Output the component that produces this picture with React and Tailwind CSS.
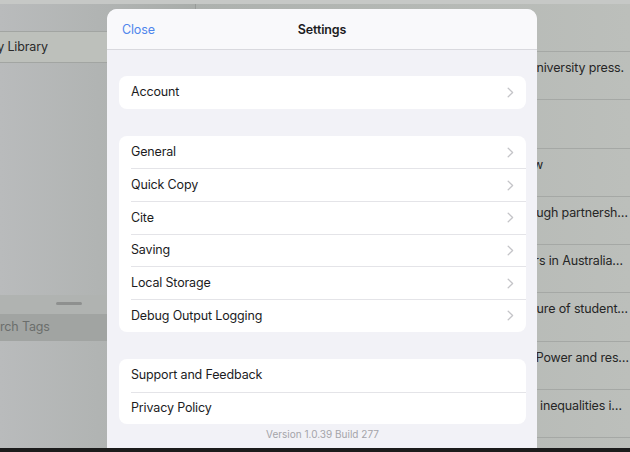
import React from 'react';

const groups = [
  [{ label: 'Account', chevron: true }],
  [
    { label: 'General', chevron: true },
    { label: 'Quick Copy', chevron: true },
    { label: 'Cite', chevron: true },
    { label: 'Saving', chevron: true },
    { label: 'Local Storage', chevron: true },
    { label: 'Debug Output Logging', chevron: true },
  ],
  [
    { label: 'Support and Feedback', chevron: false },
    { label: 'Privacy Policy', chevron: false },
  ],
];

// titles behind the sheet, only their tails show
const items = [
  { t: 'Cambridge university press.', pr: 'pr-[6px]' },
  { t: '', pr: 'pr-[6px]' },
  { t: 'Student voice: a literature review', pr: 'pr-[87px]' },
  { t: 'Building capacity through partnersh…', pr: 'pr-[2px]' },
  { t: 'Indigenous teachers in Australia…', pr: 'pr-[7px]' },
  { t: 'The changing nature of student…', pr: 'pr-[2px]' },
  { t: 'Power and res…', pr: 'pr-[1px]' },
  { t: 'Educational inequalities i…', pr: 'pr-[8px]' },
  { t: '', pr: 'pr-[6px]' },
];

function Chevron() {
  return (
    <svg width="7" height="11" viewBox="0 0 7 11" className="shrink-0">
      <path d="M1.2 1.2 L5.6 5.5 L1.2 9.8" fill="none" stroke="#c4c4c8" strokeWidth="1.3" strokeLinecap="round" strokeLinejoin="round" />
    </svg>
  );
}

function Group({ rows }) {
  return (
    <div className="bg-white rounded-[8px] overflow-hidden">
      {rows.map((r, i) => (
        <div key={r.label} className="flex items-center h-[32.7px] pl-[12px]">
          <div className={`flex-1 h-full flex items-center pr-[12px] ${i > 0 ? 'border-t border-[#e4e4e8]' : ''}`}>
            <span className="flex-1 text-[12.5px] tracking-[-0.15px] text-[#1c1c1e]">{r.label}</span>
            {r.chevron && <Chevron />}
          </div>
        </div>
      ))}
    </div>
  );
}

export default function App() {
  return (
    <div className="w-[630px] h-[452px] relative overflow-hidden flex flex-col" style={{ fontFamily: 'Inter, "Noto Sans", sans-serif' }}>
      <div className="flex-1 flex min-h-0 border-t-[4px] border-[#c6c8c6]">
        {/* sidebar */}
        <div className="w-[196px] shrink-0 flex flex-col overflow-hidden border-r border-[#989b99] bg-gradient-to-r from-[#b9bbbc] to-[#a9adaa]">
          <div className="h-[27px] shrink-0" />
          <div className="h-[32px] shrink-0 border-y border-[#a2a5a2] bg-[#bdc0bb] flex items-center text-[12.5px] tracking-[-0.15px] text-[#2a2a2a] whitespace-nowrap">
            <span className="-ml-[14px]">My Library</span>
          </div>
          <div className="flex-1" />
          <div className="h-[19px] shrink-0 flex items-start pl-[56px] pt-[7px] bg-[#b0b3b1]">
            <div className="w-[26px] h-[3px] rounded-full bg-[#8e908f]" />
          </div>
          <div className="h-[27px] shrink-0 bg-[#a1a4a2] flex items-center text-[12.5px] tracking-[-0.15px] text-[#6b6e6c] whitespace-nowrap">
            <span className="-ml-[22px]">Search Tags</span>
          </div>
          <div className="h-[107px] shrink-0" />
        </div>
        {/* item list */}
        <div className="flex-1 flex flex-col overflow-hidden bg-gradient-to-r from-[#adb1ae] to-[#bcbfbb]">
          <div className="h-[48px] shrink-0 border-b border-[#a5a8a5]" />
          {items.map((it, i) => (
            <div key={i} className={`h-[48.3px] shrink-0 border-b border-[#a5a8a5] flex justify-end overflow-hidden pt-[7px] ${it.pr}`}>
              <span className="whitespace-nowrap text-[12.5px] tracking-[-0.15px] text-[#262626]">{it.t}</span>
            </div>
          ))}
        </div>
      </div>
      <div className="h-[4px] shrink-0 bg-[#1c1c1c] relative z-10" />

      {/* settings sheet */}
      <div className="absolute left-[107px] top-[9px] w-[430px] h-[439px] rounded-t-[10px] overflow-hidden bg-[#f2f2f7] flex flex-col">
        <div className="h-[41px] shrink-0 bg-[#f9f9fb] border-b border-[#d9d9de] relative flex items-center justify-center pt-[2px]">
          <span className="absolute left-[15px] text-[12.5px] tracking-[-0.15px] text-[#4f86ec]">Close</span>
          <span className="text-[12.5px] tracking-[-0.15px] font-semibold text-[#1c1c1e]">Settings</span>
        </div>
        <div className="flex flex-col pl-[12px] pr-[11px] pt-[26px]">
          <Group rows={groups[0]} />
          <div className="h-[27px]" />
          <Group rows={groups[1]} />
          <div className="h-[27px]" />
          <Group rows={groups[2]} />
          <div className="text-center text-[10px] text-[#a4a4a9] mt-[3px]">Version 1.0.39 Build 277</div>
        </div>
      </div>
    </div>
  );
}
